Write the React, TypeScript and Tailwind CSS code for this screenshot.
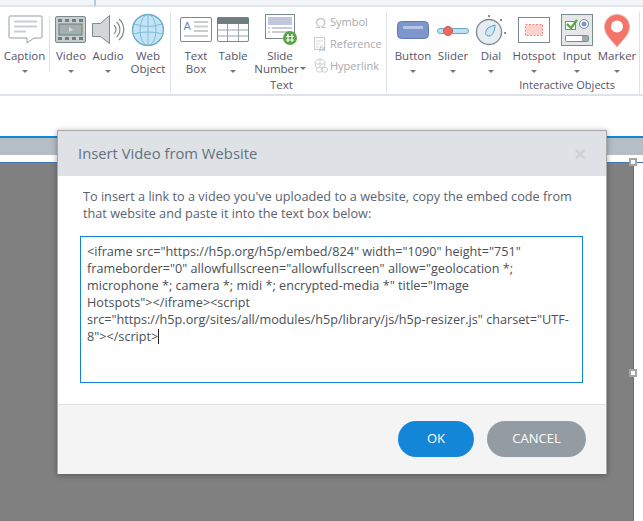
import type { ReactNode } from "react";

const stroke = "#7b8a8e";

function Arrow() {
  return <div className="w-0 h-0 border-x-[3px] border-x-transparent border-t-[3px] border-t-[#777]" />;
}

// one big ribbon button: icon box, label, optional dropdown arrow
function RibbonItem({ w, icon, label, label2, arrow = true }: { w: string; icon: ReactNode; label: string; label2?: ReactNode; arrow?: boolean }) {
  return (
    <div className={`flex flex-col items-center shrink-0 ${w}`}>
      <div className="h-9 w-9 flex justify-center">{icon}</div>
      <div className="mt-[1px] text-[11.5px] leading-[13px] text-[#55556a] whitespace-nowrap">{label}</div>
      {label2 && <div className="text-[11.5px] leading-[13px] text-[#55556a] whitespace-nowrap">{label2}</div>}
      {arrow && <div className="mt-[8px]"><Arrow /></div>}
    </div>
  );
}

function Svg({ children }: { children: ReactNode }) {
  return <svg width="36" height="36" viewBox="0 0 36 36" className="shrink-0 overflow-visible">{children}</svg>;
}

const CaptionIcon = () => (
  <Svg>
    <path d="M3 4h31a1 1 0 0 1 1 1v20a1 1 0 0 1-1 1h-7l-7 5v-5H3a1 1 0 0 1-1-1V5a1 1 0 0 1 1-1z" fill="#fff" stroke="#939ea2" strokeWidth="1" />
    <path d="M7 9.5h23M7 14.5h23M7 19.5h12" stroke="#c9cdd0" strokeWidth="2" />
  </Svg>
);

const VideoIcon = () => (
  <Svg>
    <rect x="2.5" y="4.5" width="30" height="26" rx="1.5" fill="#c8cdcd" stroke={stroke} />
    <rect x="6" y="12" width="23" height="11" fill="#a4b0ae" stroke="#6f7d7f" />
    <path d="M16 15l4 2.5-4 2.5z" fill="#d5dbda" />
    <path d="M5 8.5h4M12 8.5h4M19 8.5h4M26 8.5h4M5 26.5h4M12 26.5h4M19 26.5h4M26 26.5h4" stroke="#6f7d7f" strokeWidth="3" />
  </Svg>
);

const AudioIcon = () => (
  <Svg>
    <path d="M2.5 11.5h8l9-8v28l-9-7h-8z" fill="#d3d6d6" stroke={stroke} />
    <path d="M24 13a6 6 0 0 1 0 9M26.5 10a10 10 0 0 1 0 15M29 7a14 14 0 0 1 0 21" fill="none" stroke="#7f8b8e" strokeWidth="1.2" />
  </Svg>
);

const WebIcon = () => (
  <Svg>
    <circle cx="18" cy="18" r="15.5" fill="#c1e4f7" stroke="#68a9c4" strokeWidth="1.3" />
    <ellipse cx="18" cy="18" rx="8" ry="15.5" fill="none" stroke="#86bbd3" />
    <path d="M18 2.5v31M4 12q14 5 28 0M3 22q15-4 30 0" fill="none" stroke="#86bbd3" />
  </Svg>
);

const TextBoxIcon = () => (
  <Svg>
    <rect x="2.5" y="5.5" width="31" height="24" rx="1.5" fill="#fff" stroke={stroke} />
    <text x="5.5" y="18" fontSize="11" fill="#6f84c4" fontFamily="Liberation Sans">A</text>
    <path d="M16 10h14M16 14.5h14M16 19h14M6 24h24" stroke="#c9cdd0" strokeWidth="2" />
  </Svg>
);

const TableIcon = () => (
  <Svg>
    <rect x="2.5" y="5.5" width="31" height="24" rx="1.5" fill="#fff" stroke={stroke} />
    <path d="M3 5.5h30a1 1 0 0 1 1 1V12H2V6.5a1 1 0 0 1 1-1z" fill="#6f7d7f" />
    <path d="M2.5 18h31M2.5 24h31M12.5 12v17M23.5 12v17" stroke="#9aa5a7" />
  </Svg>
);

const SlideNumberIcon = () => (
  <Svg>
    <rect x="3.5" y="2.5" width="29" height="24" fill="#fff" stroke={stroke} />
    <rect x="6" y="5" width="24" height="8" fill="#c3c7dc" />
    <path d="M6 16h2M10 16h20M6 20h2M10 20h18" stroke="#b5bad2" strokeWidth="1.5" />
    <circle cx="28" cy="26" r="7" fill="#5aa545" />
    <path d="M26 22v8M30 22v8M24 24.5h8M24 28h8" stroke="#fff" strokeWidth="1.2" />
  </Svg>
);

const ButtonIcon = () => (
  <Svg>
    <rect x="2.5" y="9.5" width="31" height="17" rx="4" fill="#7d97cd" stroke="#6079b0" />
    <rect x="8" y="14" width="20" height="3" fill="#b6c5e4" />
  </Svg>
);

const SliderIcon = () => (
  <Svg>
    <rect x="2.5" y="16.5" width="31" height="5" rx="2.5" fill="#bfe0f2" stroke="#68a9c4" />
    <circle cx="13" cy="19" r="4.5" fill="#ef6a5e" stroke="#c9564c" />
  </Svg>
);

const DialIcon = () => (
  <Svg>
    <circle cx="16" cy="20" r="12.5" fill="#e6ecef" stroke={stroke} strokeWidth="1.3" />
    <path d="M22 13c0 5-2 11-6 11-4 0-4-4-2-7 2-2 5-3 8-4z" fill="#d3e7f2" stroke="#4f9fc4" />
    <circle cx="16" cy="4" r="1" fill="#666" />
    <circle cx="28" cy="8" r="1" fill="#666" />
    <circle cx="32" cy="21" r="1" fill="#666" />
  </Svg>
);

const HotspotIcon = () => (
  <Svg>
    <rect x="2.5" y="5.5" width="31" height="25" fill="#fff" stroke={stroke} />
    <rect x="9.5" y="12.5" width="17" height="11" fill="#fdd2cc" stroke="#ef8a80" strokeDasharray="2 1.5" />
  </Svg>
);

const InputIcon = () => (
  <Svg>
    <rect x="2.5" y="2.5" width="31" height="31" fill="#e4e8e8" stroke={stroke} />
    <rect x="6.5" y="9.5" width="10" height="8" fill="#fff" stroke={stroke} />
    <path d="M8 12l4 4 6-8" fill="none" stroke="#5aa545" strokeWidth="2.2" />
    <circle cx="25" cy="12" r="4.5" fill="#fff" stroke={stroke} />
    <circle cx="25" cy="12" r="2.5" fill="#7d97cd" />
    <rect x="6.5" y="23.5" width="23" height="6" rx="1" fill="#fff" stroke={stroke} />
    <rect x="23" y="24" width="6" height="5" fill="#a0aaad" />
  </Svg>
);

const MarkerIcon = () => (
  <Svg>
    <path d="M18 2.5c7 0 12.5 5.500 12.5 12.500 0 8-8 14-12.500 20-4.500-6-12.500-12-12.500-20C5.500 8 11 2.500 18 2.500z" fill="#f4746a" stroke="#e8b3ad" />
    <circle cx="18" cy="14.5" r="6" fill="#fff" />
  </Svg>
);

function SmallRow({ icon, label }: { icon: ReactNode; label: string }) {
  return (
    <div className="flex items-center h-[22px] text-[11px] text-[#a9a9ad]">
      <div className="w-[17px] flex justify-center">{icon}</div>
      <span className="ml-[1px]">{label}</span>
    </div>
  );
}

const code = [
  '<iframe src="https://h5p.org/h5p/embed/824" width="1090" height="751"',
  'frameborder="0" allowfullscreen="allowfullscreen" allow="geolocation *;',
  'microphone *; camera *; midi *; encrypted-media *" title="Image',
  'Hotspots"></iframe><script',
  'src="https://h5p.org/sites/all/modules/h5p/library/js/h5p-resizer.js" charset="UTF-',
];

export default function App() {
  return (
    <div className="relative w-[643px] h-[521px] overflow-hidden bg-white font-['Open_Sans','Noto_Sans',sans-serif]">
      {/* title strip */}
      <div className="relative h-[7px] bg-[#f1f5f8] border-b-2 border-[#e0e5e9]">
        <div className="absolute left-[94px] top-0 w-[2px] h-[6px] bg-[#a9cfee]" />
      </div>

      {/* ribbon */}
      <div className="flex h-[89px] pt-[5px] border-b-2 border-[#dde3e8]">
        <div className="w-[171px] shrink-0 flex border-r border-[#dde2e6] items-start">
          <RibbonItem w="w-[49px]" icon={<CaptionIcon />} label="Caption" />
          <div className="w-px h-[56px] mt-[4px] bg-[#dde2e6] shrink-0" />
          <div className="w-[2px] shrink-0" />
          <RibbonItem w="w-[38px]" icon={<VideoIcon />} label="Video" />
          <RibbonItem w="w-[36px]" icon={<AudioIcon />} label="Audio" />
          <RibbonItem w="w-[44px]" icon={<WebIcon />} label="Web" label2="Object" arrow={false} />
        </div>

        <div className="w-[216px] shrink-0 flex flex-col border-r border-[#dde2e6]">
          <div className="flex h-[66px] pl-[3px]">
            <RibbonItem w="w-[44px]" icon={<TextBoxIcon />} label="Text" label2="Box" arrow={false} />
            <RibbonItem w="w-[30px]" icon={<TableIcon />} label="Table" />
            <RibbonItem
              w="w-[64px]"
              icon={<SlideNumberIcon />}
              label="Slide"
              label2={
                <span className="flex items-center gap-[1px]">
                  Number
                  <Arrow />
                </span>
              }
              arrow={false}
            />
            <div className="flex flex-col -mt-[1px]">
              <SmallRow
                label="Symbol"
                icon={<span className="text-[15px] leading-none text-[#c4c8ca] font-['Liberation_Sans']">Ω</span>}
              />
              <SmallRow
                label="Reference"
                icon={
                  <svg width="16" height="16" viewBox="0 0 16 16">
                    <rect x="1.5" y="1.5" width="10" height="12" fill="#fff" stroke="#c9cdd0" />
                    <path d="M3 5h7M3 8h3M3 11h3" stroke="#d4d7d9" />
                    <text x="6" y="15" fontSize="9" fontStyle="italic" fill="#a9adb0" fontFamily="Liberation Serif">fx</text>
                  </svg>
                }
              />
              <SmallRow
                label="Hyperlink"
                icon={
                  <svg width="16" height="16" viewBox="0 0 16 16" fill="none" stroke="#c9cdd0">
                    <circle cx="7" cy="6" r="5" />
                    <path d="M2 6h10M7 1v10" />
                    <rect x="3.5" y="9.5" width="6" height="4.5" rx="2" fill="#fff" />
                    <rect x="8.5" y="9.5" width="6" height="4.5" rx="2" />
                  </svg>
                }
              />
            </div>
          </div>
          <div className="text-[11.5px] leading-[14px] text-[#55556a] pl-[99px]">Text</div>
        </div>

        <div className="w-[253px] shrink-0 flex flex-col border-r border-[#dde2e6]">
          <div className="flex h-[66px]">
            <RibbonItem w="w-[52px]" icon={<ButtonIcon />} label="Button" />
            <RibbonItem w="w-[28px]" icon={<SliderIcon />} label="Slider" />
            <RibbonItem w="w-[48px]" icon={<DialIcon />} label="Dial" />
            <RibbonItem w="w-[38px]" icon={<HotspotIcon />} label="Hotspot" />
            <RibbonItem w="w-[48px]" icon={<InputIcon />} label="Input" />
            <RibbonItem w="w-[32px]" icon={<MarkerIcon />} label="Marker" />
          </div>
          <div className="text-[11px] leading-[14px] text-[#55556a] text-right pr-[24px] whitespace-nowrap">Interactive Objects</div>
        </div>
      </div>

      {/* slide editor behind the dialog */}
      <div className="h-[40px]" />
      <div className="h-[2px] bg-[#1486d8]" />
      <div className="h-[17px] bg-[#b6bec5]" />
      <div className="h-[8px] border-b border-[#3f79b5]" />
      <div className="flex h-[358px]">
        <div className="w-[633px] bg-[#808080]" />
        <div className="w-px bg-[#3f79b5]" />
      </div>

      {/* selection handles */}
      <div className="absolute left-[629px] top-[158px] w-2 h-2 bg-white border-2 border-[#a5a5a5]" />
      <div className="absolute left-[629px] top-[369px] w-2 h-2 bg-white border-2 border-[#a5a5a5]" />

      {/* dialog */}
      <div className="absolute left-[57px] top-[130px] w-[550px] h-[344px] flex flex-col bg-white border-t border-r border-l border-[#a8a8a8] shadow-[0_1px_6px_rgba(0,0,0,0.35)]">
        <div className="h-[45px] shrink-0 flex items-center justify-between bg-[#dee2e6] pl-[20px] pr-[20px]">
          <span className="text-[14.8px] text-[#66717c]">Insert Video from Website</span>
          <span className="text-[20px] leading-none font-bold text-[#cfd2d5] font-['Liberation_Sans']">×</span>
        </div>

        <div className="flex-1 pt-[12px] px-[22px]">
          <p className="pl-[3px] text-[12.7px] leading-[17px] text-[#5a6270] whitespace-nowrap">
            To insert a link to a video you've uploaded to a website, copy the embed code from
            <br />
            that website and paste it into the text box below:
          </p>
          <div className="mt-[14px] h-[147px] w-[503px] border border-[#1486d8] px-[6px] pt-[6px] text-[12.65px] leading-[17px] text-[#4a4f58] whitespace-nowrap">
            {code.map((line) => (
              <div key={line}>{line}</div>
            ))}
            <div className="flex items-center">
              8"&gt;&lt;/script&gt;
              <span className="w-px h-[15px] bg-[#222]" />
            </div>
          </div>
        </div>

        <div className="h-[70px] shrink-0 flex justify-end gap-[13px] pt-[16px] pr-[20px] bg-[#f4f4f4] border-t border-[#e0e0e0]">
          <button className="w-[76px] h-[36px] rounded-full bg-[#1486d8] text-white text-[13px]">OK</button>
          <button className="w-[99px] h-[36px] rounded-full bg-[#939ca3] text-white text-[13px]">CANCEL</button>
        </div>
      </div>
    </div>
  );
}
